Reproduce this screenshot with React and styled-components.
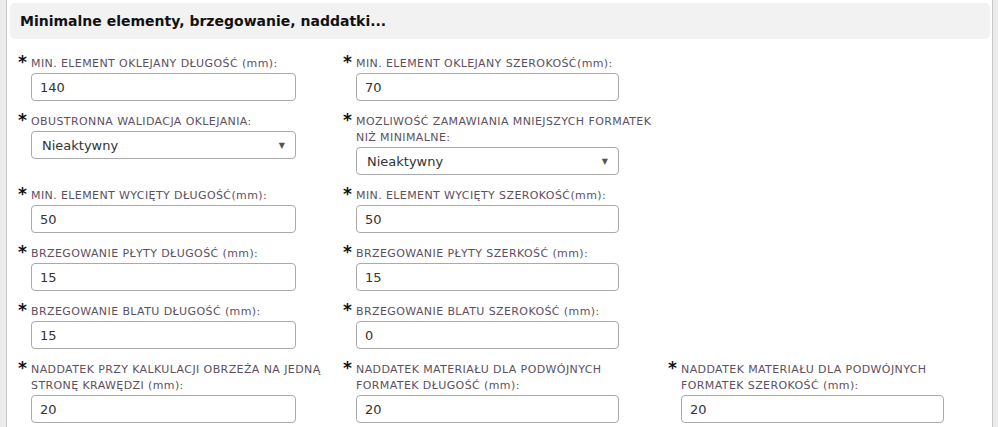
import React from "react";
import styled, { createGlobalStyle } from "styled-components";

const Global = createGlobalStyle`
  html, body { margin: 0; padding: 0; background: #ececec; }
  body { font-family: "DejaVu Sans", Verdana, sans-serif; }
`;

const Panel = styled.div`
  margin-left: 6px;
  width: 987px;
  height: 427px;
  background: #fff;
  border-left: 1px solid #c8c8c8;
  border-right: 1px solid #c8c8c8;
  padding-top: 3px;
  box-sizing: border-box;
  overflow: hidden;
`;

const Header = styled.div`
  margin: 0 2px 0 3px;
  height: 36px;
  background: #f2f2f2;
  border-radius: 5px;
  display: flex;
  align-items: center;
  padding-left: 10px;
  font-size: 14px;
  font-weight: bold;
  color: #111;
`;

const Grid = styled.div`
  display: grid;
  grid-template-columns: repeat(3, 325px);
  padding: 17px 0 0 11px;
  row-gap: 13px;
`;

const Field = styled.div`
  display: flex;
  grid-column: ${(p) => p.col};
`;

const Star = styled.span`
  width: 13px;
  flex: none;
  font-size: 17px;
  font-weight: bold;
  line-height: 13px;
  color: #111;
  font-family: "DejaVu Sans", sans-serif;
`;

const Body = styled.div`
  display: flex;
  flex-direction: column;
`;

const Label = styled.label`
  font-size: 11px;
  line-height: 16px;
  letter-spacing: 0.4px;
  color: #5d4f5f;
  margin-bottom: 1px;
  white-space: nowrap;
`;

const Input = styled.input`
  box-sizing: border-box;
  width: ${(p) => p.w || 265}px;
  height: 28px;
  border: 1px solid #aaa;
  border-radius: 4px;
  padding: 0 8px;
  font-family: "DejaVu Sans", Verdana, sans-serif;
  font-size: 13px;
  color: #333;
  outline: none;
`;

const SelectBox = styled.div`
  box-sizing: border-box;
  width: ${(p) => p.w || 265}px;
  height: 28px;
  border: 1px solid #aaa;
  border-radius: 4px;
  padding: 0 10px 0 10px;
  display: flex;
  align-items: center;
  justify-content: space-between;
  font-size: 13px;
  color: #333;
`;

const Arrow = styled.span`
  font-size: 8px;
  color: #555;
`;

const fields = [
  { col: 1, label: ["MIN. ELEMENT OKLEJANY DŁUGOŚĆ (mm):"], value: "140" },
  { col: 2, label: ["MIN. ELEMENT OKLEJANY SZEROKOŚĆ(mm):"], value: "70", w: 263 },
  { col: 1, label: ["OBUSTRONNA WALIDACJA OKLEJANIA:"], select: "Nieaktywny" },
  { col: 2, label: ["MOZLIWOŚĆ ZAMAWIANIA MNIEJSZYCH FORMATEK", "NIŻ MINIMALNE:"], select: "Nieaktywny", w: 263 },
  { col: 1, label: ["MIN. ELEMENT WYCIĘTY DŁUGOŚĆ(mm):"], value: "50" },
  { col: 2, label: ["MIN. ELEMENT WYCIĘTY SZEROKOŚĆ(mm):"], value: "50", w: 263 },
  { col: 1, label: ["BRZEGOWANIE PŁYTY DŁUGOŚĆ (mm):"], value: "15" },
  { col: 2, label: ["BRZEGOWANIE PŁYTY SZERKOŚĆ (mm):"], value: "15", w: 263 },
  { col: 1, label: ["BRZEGOWANIE BLATU DŁUGOŚĆ (mm):"], value: "15" },
  { col: 2, label: ["BRZEGOWANIE BLATU SZEROKOŚĆ (mm):"], value: "0", w: 263 },
  { col: 1, label: ["NADDATEK PRZY KALKULACJI OBRZEŻA NA JEDNĄ", "STRONĘ KRAWĘDZI (mm):"], value: "20" },
  { col: 2, label: ["NADDATEK MATERIAŁU DLA PODWÓJNYCH", "FORMATEK DŁUGOŚĆ (mm):"], value: "20", w: 263 },
  { col: 3, label: ["NADDATEK MATERIAŁU DLA PODWÓJNYCH", "FORMATEK SZEROKOŚĆ (mm):"], value: "20", w: 263 },
];

export default function App() {
  return (
    <>
      <Global />
      <Panel>
        <Header>Minimalne elementy, brzegowanie, naddatki...</Header>
        <Grid>
          {fields.map((f, i) => (
            <Field key={i} col={f.col}>
              <Star>*</Star>
              <Body>
                <Label>
                  {f.label.map((l, j) => (
                    <React.Fragment key={j}>
                      {j > 0 && <br />}
                      {l}
                    </React.Fragment>
                  ))}
                </Label>
                {f.select ? (
                  <SelectBox w={f.w}>
                    {f.select}
                    <Arrow>▼</Arrow>
                  </SelectBox>
                ) : (
                  <Input w={f.w} defaultValue={f.value} />
                )}
              </Body>
            </Field>
          ))}
        </Grid>
      </Panel>
    </>
  );
}
